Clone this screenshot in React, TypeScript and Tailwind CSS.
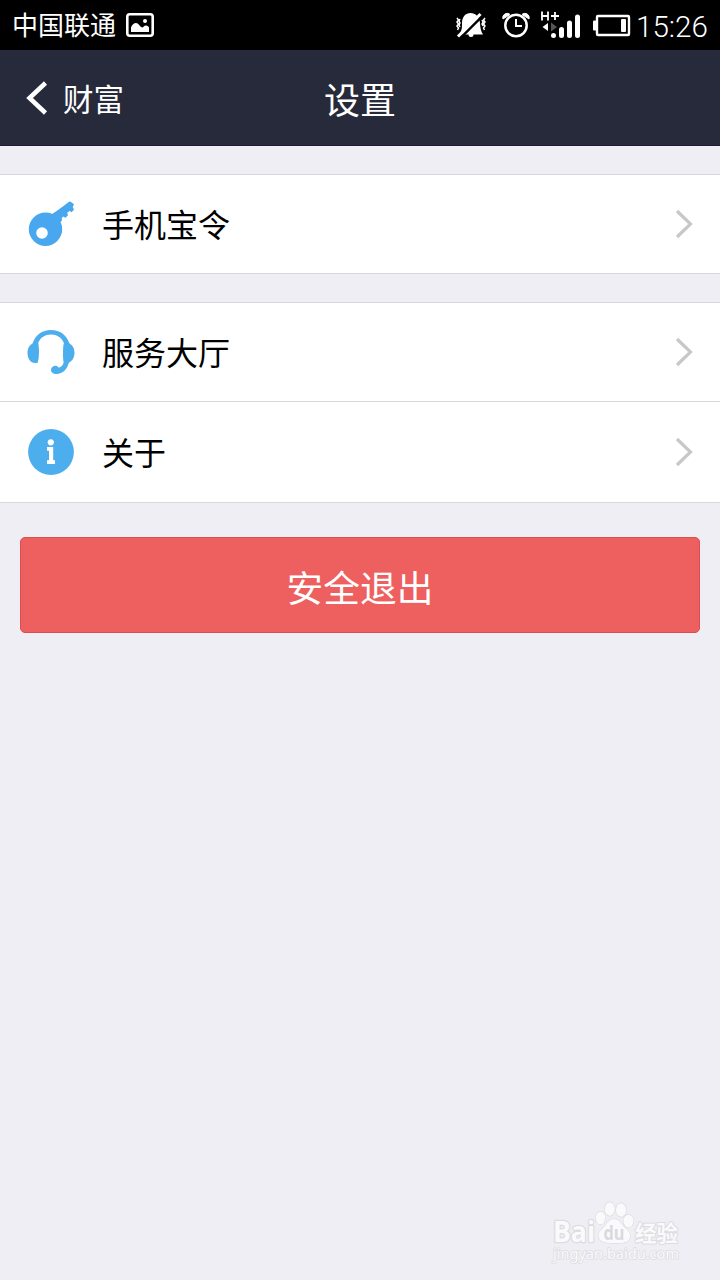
import React from 'react';

interface RowProps {
  icon: React.ReactNode;
  label: string;
  className?: string;
}

const PictureIcon = () => (
  <svg width="28" height="24" viewBox="126 13 28 24" fill="none">
    <rect x="127.3" y="14.3" width="25.4" height="21.4" rx="2.5" stroke="#fff" strokeWidth="2.6" />
    <path d="M131 32v-4.500c1-3 3-4.500 5-4.500 2.500 0 4 3.500 6 4.500 1.500 0 2-2 4-2 1.500 0 2.500 1 3 2v4.500z" fill="#fff" />
    <circle cx="145" cy="21" r="2" fill="#fff" />
  </svg>
);

const MutedBellIcon = () => (
  <svg width="32" height="28" viewBox="455 12 32 28" fill="none">
    <path d="M460 34c2-3 2-5.500 2-10 0-6 3.500-10 8.500-10s9 4 9.500 10c.3 5 .8 8 3 11.500H473.500a2.500 2.500 0 0 1-5 0H460z" fill="#fff" />
    <path d="M460 39.500L482.500 16.800" stroke="#000" strokeWidth="2.500" />
    <path d="M458 37.500L480.500 15" stroke="#fff" strokeWidth="3" />
    <path d="M457 19l1.500 2-1.500 2 1.500 2-1.500 2 1.500 2-1 2M460 20l-1 2 1 2-1 2 1 2M485 19l-1.500 2 1.500 2-1.500 2 1.500 2-1.500 2 1 2M482 21l1 2-1 2 1 2" stroke="#fff" strokeWidth="1.500" />
  </svg>
);

const AlarmIcon = () => (
  <svg width="30" height="28" viewBox="501 12 30 28" fill="none" stroke="#fff">
    <circle cx="516" cy="26.500" r="10.700" strokeWidth="2.500" />
    <path d="M516 20v7h6" strokeWidth="2" />
    <path d="M503 20c-1.500-4 4-7.500 7-4.500zM529 20c1.500-4-4-7.500-7-4.500z" fill="#fff" strokeWidth="1" />
  </svg>
);

const SignalIcon = () => (
  <svg width="42" height="30" viewBox="540 10 42 30" fill="none" stroke="#fff">
    <path d="M542 11.500v9M548 11.500v9M542 16h6M551 16h8M555 12v8" strokeWidth="1.800" />
    <path d="M548 23v8l-5.500-4z" fill="#fff" stroke="none" />
    <path d="M551 22.500v9l6-4.500z" fill="#555" stroke="none" />
    <path d="M553.500 35.500v0M561.500 29.500v6M569.500 23v12.500M577.500 17v18.500" strokeWidth="5" strokeLinecap="round" />
  </svg>
);

const BatteryIcon = () => (
  <svg width="38" height="24" viewBox="593 14 38 24" fill="none">
    <rect x="597" y="17" width="32" height="19" rx="1" stroke="#fff" strokeWidth="2.400" />
    <rect x="593" y="21.500" width="4" height="10" rx="1" fill="#fff" />
    <rect x="621" y="20" width="5" height="13" rx="1" fill="#fff" />
  </svg>
);

const KeyIcon = () => (
  <svg width="52" height="50" viewBox="25 199 52 50" fill="#49a7ef">
    <path d="M52.500 214.500L69 201.700q1-.7 2 .2l3 2.300-1.300 2.800 1.300 2.500-2.300 2.700-2-1.200-2.500 1.700.8 2.500-2.400 2.600-2.600-1.200-1.300 1.800.4 2-2.400 2-2 1z" />
    <path d="M52 214l14-9v7l-5 5v3l-5 4z" />
    <path fillRule="evenodd" d="M45.500 212.500a16.700 16.700 0 1 0 0 33.400 16.700 16.700 0 1 0 0-33.400zM42 227.200a5.800 5.800 0 1 1 0 11.600 5.800 5.800 0 1 1 0-11.600z" />
  </svg>
);

const HeadsetIcon = () => (
  <svg width="52" height="50" viewBox="25 327 52 50" fill="#4daeed">
    <path d="M32.500 343.500C35.500 335 42 330 51 330s15.500 5 18.500 13.500c3 1.500 5 5 5 9.200 0 4.800-2.200 8.300-5.500 9.800-1.800 6.500-6 11.500-12.500 11.500-3 0-5.500-1.500-5.500-4 0-2.400 2-4.200 4.500-4.200 1.700 0 2.200.8 3.300 2 2-.8 4-1.900 4.700-4.800v-1.600c-.7-3.500-.7-15 .4-18.400C61.500 337.500 57 334.600 51 334.600S40.500 337.500 38.200 343c1 3.500 1.400 15.500-.7 20h-2.400c-4.800 0-7.600-4.800-7.600-10.300 0-4.200 2-7.700 5-9.200z" />
  </svg>
);

const InfoIcon = () => (
  <svg width="52" height="50" viewBox="25 427 52 50">
    <circle cx="51" cy="452" r="22.900" fill="#4daeed" />
    <circle cx="50.800" cy="442.300" r="3.100" fill="#fff" />
    <path d="M47 447h6.200v13.300h1.800v3.700h-8v-3.700h2v-9.600h-2z" fill="#fff" />
  </svg>
);

const Row = ({ icon, label, className = 'h-[98px]' }: RowProps) => (
  <div className={`flex items-center bg-white pl-[25px] pr-[26px] ${className}`}>
    {icon}
    <span className="ml-[25px] pb-[3px] text-[32px] leading-[48px] text-black">{label}</span>
    <svg className="ml-auto" width="20" height="30" viewBox="0 0 20 30" fill="none">
      <path d="M3 2l13.500 13L3 28" stroke="#c8c8c8" strokeWidth="3.200" />
    </svg>
  </div>
);

const Watermark = () => (
  <svg className="absolute left-[545px] top-[1195px]" width="145" height="75" viewBox="545 1195 145 75" fill="#fafafc" stroke="#dcdce1" strokeWidth="1.300">
    <g paintOrder="stroke" strokeLinejoin="round">
      <text x="553" y="1242" fontFamily="Open Sans" fontSize="28" fontWeight="700" textLength="42" lengthAdjust="spacingAndGlyphs" strokeWidth="2.500">Bai</text>
      <ellipse cx="600.500" cy="1218" rx="4.800" ry="6.300" />
      <ellipse cx="609.800" cy="1209" rx="5" ry="6.800" />
      <ellipse cx="621" cy="1210" rx="5" ry="6.800" />
      <ellipse cx="628.500" cy="1221" rx="5" ry="6.300" />
      <path d="M614 1219c5 0 7 4 9 7 3 3 8 6 7 11-1 6-7 6-16 6s-15-1-15.500-7c0-5 4-7 6.500-10 2-3 4-7 9-7z" />
      <text x="603.500" y="1240" fontFamily="Open Sans" fontSize="19" fontWeight="700" textLength="21" lengthAdjust="spacingAndGlyphs" fill="#d9d9de" stroke="none">du</text>
      <text x="635" y="1241" fontFamily="Noto Sans CJK SC" fontSize="22" fontWeight="700" textLength="43" lengthAdjust="spacingAndGlyphs" strokeWidth="2">经验</text>
      <text x="553" y="1259" fontFamily="Noto Sans" fontSize="14" textLength="126" lengthAdjust="spacingAndGlyphs" strokeWidth="1.500">jingyan.baidu.com</text>
    </g>
  </svg>
);

export default function App() {
  return (
    <div className="relative h-[1280px] w-[720px] overflow-hidden bg-[#efeef4] font-['Noto_Sans_CJK_SC',sans-serif]">
      <div className="flex h-[50px] items-center bg-black pl-3 pr-3 text-white">
        <span className="mr-[10px] pb-[2px] text-[26px] leading-[40px]">中国联通</span>
        <PictureIcon />
        <div className="ml-auto flex items-center">
          <MutedBellIcon />
          <div className="ml-[14px]"><AlarmIcon /></div>
          <div className="ml-[9px]"><SignalIcon /></div>
          <div className="ml-[11px] mr-[5px]"><BatteryIcon /></div>
          <span className="w-[72px] pt-[3px] font-['Roboto',sans-serif] text-[29.600px] font-[350] leading-[40px]">15:26</span>
        </div>
      </div>

      <header className="grid h-24 grid-cols-3 items-center border-b border-[#211a33] bg-[#272a3b] text-white">
        <div className="flex items-center pl-[25px]">
          <svg width="24" height="36" viewBox="0 0 24 36" fill="none">
            <path d="M20.500 3L4.500 18l16 15" stroke="#fff" strokeWidth="4.500" />
          </svg>
          <span className="ml-[14px] text-[30.500px] leading-[44px]">财富</span>
        </div>
        <h1 className="pt-px text-center text-[36px] leading-[52px]">设置</h1>
      </header>

      <main>
        <section className="mt-7 border-y border-[#d8d8dc]">
          <Row icon={<KeyIcon />} label="手机宝令" />
        </section>
        <section className="mt-7 border-y border-[#d8d8dc]">
          <Row icon={<HeadsetIcon />} label="服务大厅" />
          <Row icon={<InfoIcon />} label="关于" className="h-[101px] border-t border-[#d8d8dc]" />
        </section>
        <button className="mx-5 mt-[34px] flex h-24 w-[680px] items-center justify-center rounded-[5px] border border-[#da4f50] bg-[#ee5f5f] pt-px text-[36.700px] leading-[54px] text-white">
          安全退出
        </button>
      </main>
      <Watermark />
    </div>
  );
}
